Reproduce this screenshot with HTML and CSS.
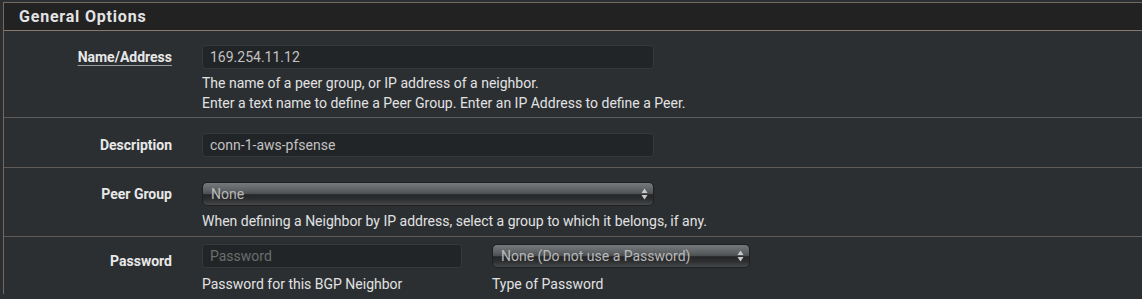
FILE: index.html
```html
<!DOCTYPE html>
<html>
<head>
<meta charset="utf-8">
<link rel="stylesheet" href="styles.css">
</head>
<body>
<div class="panel">
  <div class="panel-heading">General Options</div>
  <div class="row row-name">
    <label class="label"><span class="ul">Name/Address</span></label>
    <div class="field">
      <input class="text" type="text" value="169.254.11.12">
      <div class="help">The name of a peer group, or IP address of a neighbor.<br>Enter a text name to define a Peer Group. Enter an IP Address to define a Peer.</div>
    </div>
  </div>
  <div class="row row-desc">
    <label class="label">Description</label>
    <div class="field">
      <input class="text" type="text" value="conn-1-aws-pfsense">
    </div>
  </div>
  <div class="row row-group">
    <label class="label">Peer Group</label>
    <div class="field">
      <div class="sel">
        <select><option>None</option></select>
        <svg class="arrows" width="7" height="12" viewBox="0 0 7 12"><path d="M3.5 0.5 L6.5 5 L0.5 5 Z M0.5 7 L6.5 7 L3.5 11.5 Z" fill="#c9c9c9"/></svg>
      </div>
      <div class="help">When defining a Neighbor by IP address, select a group to which it belongs, if any.</div>
    </div>
  </div>
  <div class="row row-pass">
    <label class="label">Password</label>
    <div class="pair">
      <div class="half">
        <input class="text" type="text" placeholder="Password">
        <div class="help">Password for this BGP Neighbor</div>
      </div>
      <div class="half">
        <div class="sel">
          <select><option>None (Do not use a Password)</option></select>
          <svg class="arrows" width="7" height="12" viewBox="0 0 7 12"><path d="M3.5 0.5 L6.5 5 L0.5 5 Z M0.5 7 L6.5 7 L3.5 11.5 Z" fill="#c9c9c9"/></svg>
        </div>
        <div class="help">Type of Password</div>
      </div>
    </div>
  </div>
</div>
</body>
</html>
```

FILE: styles.css
```css
html, body {
  margin: 0;
  padding: 0;
  background: #2b2f32;
  font-family: Roboto, "Liberation Sans", sans-serif;
  color: #e2e2e2;
  height: 299px;
  overflow: hidden;
}
.panel {
  margin: 2px 0 0 3px;
  border-top: 1px solid #736b61;
  border-left: 1px solid #736b61;
}
.panel-heading {
  height: 27px;
  line-height: 27px;
  background: #222223;
  border-bottom: 1px solid #857a6c;
  padding-left: 15px;
  font-size: 16px;
  font-weight: 700;
  color: #e4e4e4;
  letter-spacing: 0.8px;
}
.row {
  display: grid;
  grid-template-columns: 168px 452px;
  column-gap: 30px;
  border-bottom: 1px solid #5f5b56;
}
.row-name { padding: 14px 0 4px; }
.row-desc { padding: 15px 0 10px; }
.row-group { padding: 14px 0 5px; }
.row-pass { padding: 7px 0 0; border-bottom: none; grid-template-columns: 168px 548px; }
.label {
  text-align: right;
  font-size: 14px;
  font-weight: 700;
  color: #e8e8e8;
  line-height: 24px;
}
.row-pass .label { padding-top: 5px; }
.ul {
  text-decoration: underline;
  text-decoration-color: #9a9a9a;
  text-underline-offset: 3px;
}
.field { display: flex; flex-direction: column; }
.text {
  box-sizing: border-box;
  width: 100%;
  height: 24px;
  margin: 0;
  padding: 0 7px;
  background: #222527;
  border: 1px solid #35393c;
  border-radius: 4px;
  font-family: Roboto, "Liberation Sans", sans-serif;
  font-size: 14px;
  color: #c2c2c2;
  outline: none;
}
.text::placeholder { color: #6b6d6e; }
.help {
  font-size: 14px;
  line-height: 20px;
  color: #e2e2e2;
  margin-top: 4px;
  white-space: nowrap;
}
.row-group .help { margin-top: 5px; }
.row-pass .help { margin-top: 6px; }
.sel {
  position: relative;
  height: 24px;
}
.sel select {
  -webkit-appearance: none;
  appearance: none;
  box-sizing: border-box;
  width: 100%;
  height: 24px;
  margin: 0;
  padding: 0 8px;
  border: 1px solid #1e2021;
  border-radius: 5px;
  background: linear-gradient(to bottom, #76797b 0%, #5c5f61 35%, #4b4e50 50%, #232527 53%, #2d2f31 75%, #46484a 100%);
  color: #b9b9b9;
  font-family: Roboto, "Liberation Sans", sans-serif;
  font-size: 14px;
  outline: none;
}
.arrows {
  position: absolute;
  right: 6px;
  top: 6px;
}
.pair {
  display: grid;
  grid-template-columns: 260px 258px;
  column-gap: 30px;
}
```
